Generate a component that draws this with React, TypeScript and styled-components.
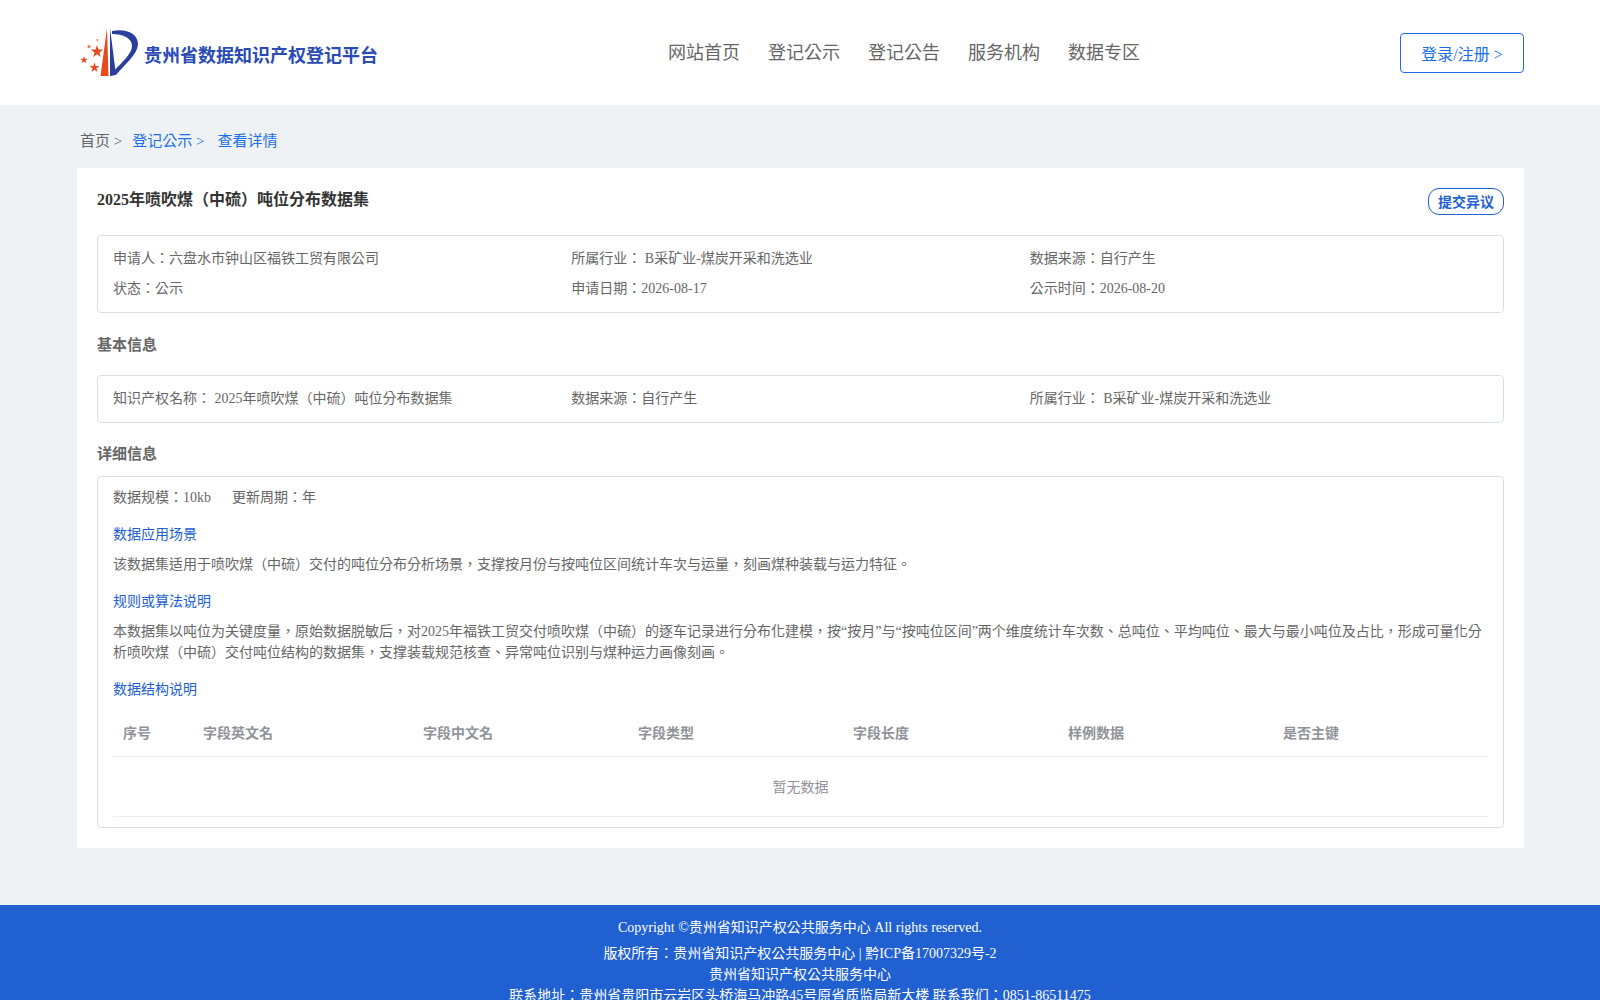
import styled, { createGlobalStyle } from 'styled-components';

const GlobalStyle = createGlobalStyle`
  html, body {
    margin: 0;
    padding: 0;
    background: #eff2f5;
    font-family: "Liberation Serif", "Noto Sans CJK TC", serif;
    font-size: 14px;
    color: #666;
  }
  * {
    box-sizing: border-box;
  }
`;

const navItems = ['网站首页', '登记公示', '登记公告', '服务机构', '数据专区'];
const columns = ['序号', '字段英文名', '字段中文名', '字段类型', '字段长度', '样例数据', '是否主键'];
const columnWidths = [80, 220, 215, 215, 215, 215, 215];

const Logo = () => (
  <LogoMark viewBox="0 0 60 52" aria-hidden="true">
    <path d="M27 2 L20.5 50 L28.5 50 Z" fill="#e8491d" />
    <path d="M30 2 L30 50 L36 49 Z" fill="#2a3f9d" />
    <path
      d="M32 5 C45 2 58 7 58 18 C58 28 45 38 36 49 L34.5 44.5 C41 37 52 28 52 20 C52 12 43 8 32 8 Z"
      fill="#2a3f9d"
    />
    <polygon
      points="17,19 18.5,23.6 23.3,23.6 19.4,26.4 20.9,31 17,28.2 13.1,31 14.6,26.4 10.7,23.6 15.5,23.6"
      fill="#e8491d"
    />
    <polygon
      points="4,30 4.9,32.8 7.8,32.8 5.5,34.5 6.4,37.3 4,35.6 1.6,37.3 2.5,34.5 0.2,32.8 3.1,32.8"
      fill="#e8491d"
    />
    <polygon
      points="14.5,36.5 15.7,40.1 19.5,40.1 16.4,42.3 17.6,45.9 14.5,43.7 11.4,45.9 12.6,42.3 9.5,40.1 13.3,40.1"
      fill="#e8491d"
    />
    <circle cx="9" cy="20.5" r="1.6" fill="#ee7a50" />
    <circle cx="17.5" cy="14" r="1" fill="#ee7a50" />
  </LogoMark>
);

const App = () => {
  return (
    <>
      <GlobalStyle />
      <Header>
        <Brand>
          <Logo />
          <BrandName>贵州省数据知识产权登记平台</BrandName>
        </Brand>
        <Nav>
          {navItems.map((item) => (
            <NavItem key={item}>{item}</NavItem>
          ))}
        </Nav>
        <LoginButton>登录/注册 &gt;</LoginButton>
      </Header>

      <Breadcrumb>
        <Crumb>首页 &gt;</Crumb>
        <Crumb $active>登记公示 &gt;</Crumb>
        <Crumb $active>查看详情</Crumb>
      </Breadcrumb>

      <Card>
        <TitleRow>
          <Title>2025年喷吹煤（中硫）吨位分布数据集</Title>
          <ObjectionButton>提交异议</ObjectionButton>
        </TitleRow>

        <InfoBox>
          <InfoItem>申请人：六盘水市钟山区福铁工贸有限公司</InfoItem>
          <InfoItem>所属行业： B采矿业-煤炭开采和洗选业</InfoItem>
          <InfoItem>数据来源：自行产生</InfoItem>
          <InfoItem>状态：公示</InfoItem>
          <InfoItem>申请日期：2026-08-17</InfoItem>
          <InfoItem>公示时间：2026-08-20</InfoItem>
        </InfoBox>

        <SectionTitle>基本信息</SectionTitle>
        <InfoBox>
          <InfoItem>知识产权名称： 2025年喷吹煤（中硫）吨位分布数据集</InfoItem>
          <InfoItem>数据来源：自行产生</InfoItem>
          <InfoItem>所属行业： B采矿业-煤炭开采和洗选业</InfoItem>
        </InfoBox>

        <SectionTitle $compact>详细信息</SectionTitle>
        <DetailBox>
          <Meta>
            <span>数据规模：10kb</span>
            <span>更新周期：年</span>
          </Meta>
          <SubTitle>数据应用场景</SubTitle>
          <Paragraph>
            该数据集适用于喷吹煤（中硫）交付的吨位分布分析场景，支撑按月份与按吨位区间统计车次与运量，刻画煤种装载与运力特征。
          </Paragraph>
          <SubTitle>规则或算法说明</SubTitle>
          <Paragraph>
            本数据集以吨位为关键度量，原始数据脱敏后，对2025年福铁工贸交付喷吹煤（中硫）的逐车记录进行分布化建模，按“按月”与“按吨位区间”两个维度统计车次数、总吨位、平均吨位、最大与最小吨位及占比，形成可量化分析喷吹煤（中硫）交付吨位结构的数据集，支撑装载规范核查、异常吨位识别与煤种运力画像刻画。
          </Paragraph>
          <SubTitle>数据结构说明</SubTitle>
          <FieldTable>
            <colgroup>
              {columnWidths.map((width, index) => (
                <col key={index} width={width} />
              ))}
            </colgroup>
            <thead>
              <tr>
                {columns.map((column) => (
                  <HeadCell key={column}>{column}</HeadCell>
                ))}
              </tr>
            </thead>
            <tbody>
              <tr>
                <EmptyCell colSpan={columns.length}>暂无数据</EmptyCell>
              </tr>
            </tbody>
          </FieldTable>
        </DetailBox>
      </Card>

      <Footer>
        <Copyright>Copyright ©贵州省知识产权公共服务中心 All rights reserved.</Copyright>
        <FooterLine>版权所有：贵州省知识产权公共服务中心 | 黔ICP备17007329号-2</FooterLine>
        <FooterLine>贵州省知识产权公共服务中心</FooterLine>
        <FooterLine>联系地址：贵州省贵阳市云岩区头桥海马冲路45号原省质监局新大楼 联系我们：0851-86511475</FooterLine>
      </Footer>
    </>
  );
};

const Header = styled.header`
  display: flex;
  align-items: center;
  height: 105px;
  padding: 0 76px 0 80px;
  background: #fff;
`;

const Brand = styled.div`
  display: flex;
  align-items: center;
  width: 588px;
`;

const LogoMark = styled.svg`
  flex: none;
  width: 60px;
  height: 52px;
  margin-bottom: 2px;
`;

const BrandName = styled.span`
  margin: 2px 0 0 4px;
  color: #2a4bb5;
  font-family: "Noto Sans CJK TC", sans-serif;
  font-size: 18px;
  font-weight: 700;
  white-space: nowrap;
`;

const Nav = styled.nav`
  display: flex;
  gap: 28px;
  margin-right: auto;
`;

const NavItem = styled.a`
  color: #666;
  font-size: 18px;
  line-height: 24px;
`;

const LoginButton = styled.button`
  width: 124px;
  height: 40px;
  padding: 0;
  border: 1px solid #1a6fe8;
  border-radius: 4px;
  background: #fff;
  color: #1a6fe8;
  font-family: inherit;
  font-size: 16px;
`;

const Breadcrumb = styled.div`
  display: flex;
  align-items: center;
  height: 63px;
  padding: 6px 0 0 80px;
  font-size: 15px;
`;

const Crumb = styled.span<{ $active?: boolean }>`
  margin-right: ${({ $active }) => ($active ? '13px' : '10px')};
  color: ${({ $active }) => ($active ? '#1a6fe8' : '#666')};
`;

const Card = styled.main`
  width: 1447px;
  margin: 0 0 57px 77px;
  padding: 20px;
  background: #fff;
`;

const TitleRow = styled.div`
  display: flex;
  align-items: flex-start;
  justify-content: space-between;
  height: 27px;
  margin-bottom: 20px;
`;

const Title = styled.h1`
  margin: 0;
  color: #333;
  font-size: 16px;
  font-weight: 700;
  line-height: 24px;
`;

const ObjectionButton = styled.button`
  height: 27px;
  padding: 0 9px 2px;
  border: 1px solid #2060d0;
  border-radius: 11px;
  background: #fff;
  color: #2060d0;
  font-family: inherit;
  font-size: 14px;
  font-weight: 700;
`;

const InfoBox = styled.div`
  display: grid;
  grid-template-columns: repeat(3, 1fr);
  padding: 8px 15px;
  border: 1px solid #dcdfe6;
  border-radius: 4px;
`;

const InfoItem = styled.div`
  line-height: 30px;
`;

const SectionTitle = styled.h2<{ $compact?: boolean }>`
  margin: ${({ $compact }) => ($compact ? '21px 0 11px' : '22px 0 19px')};
  color: #666;
  font-size: 15px;
  font-weight: 700;
  line-height: 21px;
`;

const DetailBox = styled.div`
  padding: 10px 15px;
  border: 1px solid #dcdfe6;
  border-radius: 4px;
`;

const Meta = styled.div`
  display: flex;
  gap: 21px;
  line-height: 21px;
`;

const SubTitle = styled.h3`
  margin: 16px 0 9px;
  color: #2060d0;
  font-size: 14px;
  font-weight: 400;
  line-height: 21px;
`;

const Paragraph = styled.p`
  margin: 0;
  line-height: 21px;
`;

const FieldTable = styled.table`
  width: 100%;
  border-collapse: collapse;
  table-layout: fixed;
`;

const HeadCell = styled.th`
  height: 47px;
  padding: 0 10px;
  border-bottom: 1px solid #ebeef5;
  color: #909399;
  font-size: 14px;
  font-weight: 700;
  text-align: left;
`;

const EmptyCell = styled.td`
  height: 60px;
  border-bottom: 1px solid #ebeef5;
  color: #909399;
  text-align: center;
`;

const Footer = styled.footer`
  padding: 12px 0 16px;
  background: #2060d0;
  color: #fff;
  text-align: center;
`;

const Copyright = styled.div`
  margin-bottom: 5px;
  line-height: 21px;
`;

const FooterLine = styled.div`
  line-height: 21px;
`;

export default App;
